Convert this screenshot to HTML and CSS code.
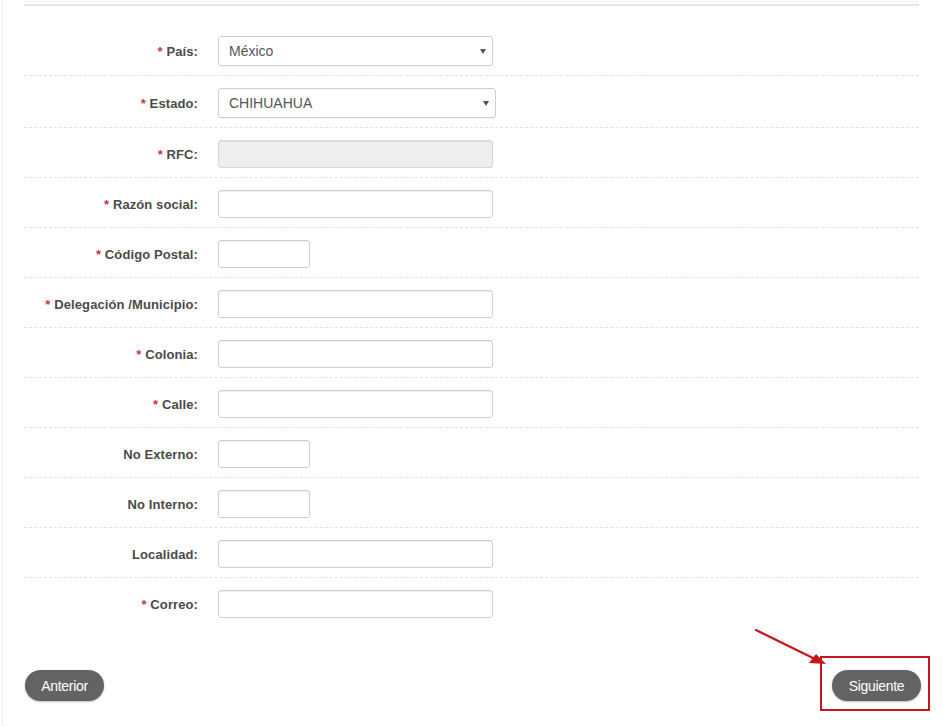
FILE: index.html
```html
<!DOCTYPE html>
<html lang="es">
<head>
<meta charset="utf-8">
<title>Datos de facturación</title>
<link rel="stylesheet" href="styles.css">
</head>
<body>
<div class="page">
  <div class="rule-top"></div>
  <div class="rule"></div>
  <form class="form">
    <div class="row">
      <label class="label"><span class="req">*</span> País:</label>
      <div class="select-wrap w-full"><span class="select-text">México</span></div>
    </div>
    <div class="row">
      <label class="label"><span class="req">*</span> Estado:</label>
      <div class="select-wrap w-wide"><span class="select-text">CHIHUAHUA</span></div>
    </div>
    <div class="row">
      <label class="label"><span class="req">*</span> RFC:</label>
      <input class="input w-full" type="text" disabled>
    </div>
    <div class="row">
      <label class="label"><span class="req">*</span> Razón social:</label>
      <input class="input w-full" type="text">
    </div>
    <div class="row">
      <label class="label"><span class="req">*</span> Código Postal:</label>
      <input class="input w-short" type="text">
    </div>
    <div class="row">
      <label class="label"><span class="req">*</span> Delegación /Municipio:</label>
      <input class="input w-full" type="text">
    </div>
    <div class="row">
      <label class="label"><span class="req">*</span> Colonia:</label>
      <input class="input w-full" type="text">
    </div>
    <div class="row">
      <label class="label"><span class="req">*</span> Calle:</label>
      <input class="input w-full" type="text">
    </div>
    <div class="row">
      <label class="label">No Externo:</label>
      <input class="input w-short" type="text">
    </div>
    <div class="row">
      <label class="label">No Interno:</label>
      <input class="input w-short" type="text">
    </div>
    <div class="row">
      <label class="label">Localidad:</label>
      <input class="input w-full" type="text">
    </div>
    <div class="row last">
      <label class="label"><span class="req">*</span> Correo:</label>
      <input class="input w-full" type="text">
    </div>
  </form>
  <div class="footer">
    <button class="btn btn-prev" type="button">Anterior</button>
    <div class="next-wrap">
      <button class="btn btn-next" type="button">Siguiente</button>
      <span class="highlight"></span>
    </div>
  </div>
  <svg class="arrow" width="90" height="50" viewBox="0 0 90 50">
    <line x1="3" y1="3" x2="62" y2="32" stroke="#c8141c" stroke-width="2.2" stroke-linecap="round"/>
    <polygon points="73,37 56,36 63,27" fill="#c8141c"/>
  </svg>
</div>
</body>
</html>
```
FILE: styles.css
```css
* { box-sizing: border-box; }

html, body {
  margin: 0;
  padding: 0;
  background: #ffffff;
}

body {
  font-family: "Liberation Sans", Arial, sans-serif;
  color: #444444;
}

.page {
  position: relative;
  width: 943px;
  height: 726px;
  overflow: hidden;
  margin-left: 2px;
  border-left: 1px solid #f3f3f3;
}

.rule-top {
  margin: 1px 26px 0 21px;
  height: 1px;
  background: #f2f2f2;
}

.rule {
  margin: 2px 26px 0 21px;
  height: 2px;
  background: #e6e6e6;
}

.form {
  margin: 18px 26px 0 21px;
}

.row {
  display: flex;
  align-items: center;
  padding: 12px 0 9px;
  border-bottom: 1px dashed #e2e2e2;
}

.row.last {
  border-bottom: none;
}

.label {
  width: 174px;
  margin-right: 20px;
  text-align: right;
  font-size: 13px;
  letter-spacing: 0.1px;
  font-weight: bold;
  color: #4a4a4a;
  white-space: nowrap;
}

.req {
  color: #c43a45;
  font-weight: bold;
}

.input {
  height: 28px;
  border: 1px solid #cfcfcf;
  border-radius: 3px;
  background: #ffffff;
  box-shadow: inset 0 1px 1px rgba(0, 0, 0, 0.06);
  font-family: inherit;
  font-size: 14px;
  padding: 0 10px;
  margin: 0;
}

.input:disabled {
  background: #eeeeee;
  border-color: #d6d6d6;
}

.w-full { width: 275px; }
.w-wide { width: 278px; }
.w-short { width: 92px; }

.select-wrap {
  position: relative;
  display: flex;
  align-items: center;
  height: 30px;
  border: 1px solid #cfcfcf;
  border-radius: 3px;
  background: #ffffff;
  box-shadow: 0 1px 1px rgba(0, 0, 0, 0.05);
  padding: 0 10px;
}

.select-text {
  font-size: 14px;
  color: #555555;
}

.select-wrap::after {
  content: "";
  position: absolute;
  right: 6px;
  top: 12px;
  border-left: 3px solid transparent;
  border-right: 3px solid transparent;
  border-top: 5px solid #555555;
}

.footer {
  display: flex;
  justify-content: space-between;
  align-items: center;
  margin: 43px 24px 0 22px;
}

.btn {
  height: 31px;
  border: none;
  border-radius: 16px;
  background: #636363;
  color: #ffffff;
  font-family: "Liberation Sans", Arial, sans-serif;
  font-size: 14px;
  letter-spacing: -0.3px;
  padding: 0;
  cursor: pointer;
  box-shadow: 0 1px 2px rgba(0, 0, 0, 0.25);
}

.btn-prev { width: 79px; }
.btn-next { width: 89px; }

.next-wrap {
  position: relative;
  display: flex;
}

.highlight {
  position: absolute;
  left: -12px;
  top: -14px;
  right: -9px;
  bottom: -10px;
  border: 2px solid #c8141c;
  pointer-events: none;
}

.arrow {
  position: absolute;
  left: 750px;
  top: 627px;
}
```
